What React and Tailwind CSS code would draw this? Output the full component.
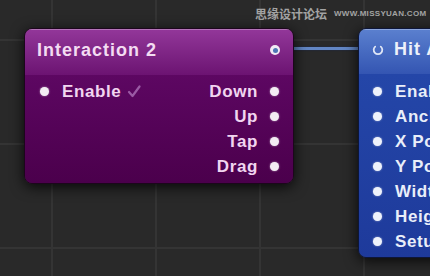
import React from "react";

const purpleOutputs = ["Down", "Up", "Tap", "Drag"];
const blueInputs = ["Enable", "Anchor Point", "X Position", "Y Position", "Width", "Height", "Setup Area"];

function Dot({ className = "bg-[#f3ecf3]" }) {
  return <span className={`block w-[9px] h-[9px] rounded-full shrink-0 shadow-[0_0_2px_rgba(255,255,255,0.6)] ${className}`} />;
}

function Check() {
  return (
    <svg width="14" height="13" viewBox="0 0 14 13" className="shrink-0">
      <path d="M2 7 L5.5 11 L12.5 1.5" fill="none" stroke="#9a5aa4" strokeWidth="2.2" strokeLinecap="round" strokeLinejoin="round" />
    </svg>
  );
}

function InputRing() {
  return (
    <svg width="12" height="12" viewBox="0 0 12 12" className="shrink-0">
      <path d="M3.2 2.6 A4.3 4.3 0 1 0 8.8 2.6" fill="none" stroke="#dfe6f6" strokeWidth="1.8" strokeLinecap="round" />
    </svg>
  );
}

export default function App() {
  return (
    <div
      className="relative w-[430px] h-[276px] overflow-hidden bg-[#292929] bg-[linear-gradient(to_right,#343434_2px,transparent_2px),linear-gradient(to_bottom,#343434_2px,transparent_2px)] bg-[size:104px_104px] bg-[position:51px_39px]"
      style={{ fontFamily: '"Liberation Sans", Arial, sans-serif' }}
    >
      {/* watermark */}
      <div className="absolute top-[8px] left-[255px] flex items-center gap-[7px] text-[#a3a3a3]">
        <span className="text-[12px] font-bold leading-none" style={{ fontFamily: '"Noto Sans CJK SC", sans-serif' }}>
          思缘设计论坛
        </span>
        <span className="text-[8px] font-bold leading-none tracking-[0.3px]">WWW.MISSYUAN.COM</span>
      </div>

      {/* connection */}
      <div className="absolute left-[293px] top-[47px] w-[66px] h-[3px] bg-[#6286c4] shadow-[0_0_2px_rgba(20,40,90,0.8)]" />

      {/* Interaction 2 node */}
      <div className="absolute left-[24px] top-[28px] w-[270px] h-[156px] rounded-[8px] border border-[#1c061c] overflow-hidden shadow-[0_3px_14px_rgba(0,0,0,0.8)] flex flex-col">
        <div className="h-[46px] shrink-0 flex items-center justify-between pl-[12px] pr-[13px] pb-[4px] bg-linear-to-b from-[#93379a] to-[#6c1372] shadow-[inset_0_1px_0_rgba(255,255,255,0.3)]">
          <span className="text-[18px] font-bold tracking-[1px] text-[#f3dcf2]">Interaction 2</span>
          <span className="w-[10px] h-[10px] rounded-full bg-[#f1eaf4] flex items-center justify-center">
            <span className="w-[5px] h-[5px] rounded-full bg-[#4d77b5]" />
          </span>
        </div>
        <div className="flex-1 flex justify-between pt-[4px] pl-[15px] pr-[14px] bg-linear-to-b from-[#5d0762] to-[#4b004c]">
          <div className="flex items-center h-[25px] gap-[13px]">
            <Dot />
            <div className="flex items-center gap-[6px]">
              <span className="text-[17px] font-bold tracking-[0.6px] text-[#f1d5f0]">Enable</span>
              <Check />
            </div>
          </div>
          <div className="flex flex-col">
            {purpleOutputs.map((label) => (
              <div key={label} className="flex items-center justify-end h-[25px] gap-[12px]">
                <span className="text-[17px] font-bold tracking-[0.6px] text-[#f1d5f0]">{label}</span>
                <Dot />
              </div>
            ))}
          </div>
        </div>
      </div>

      {/* Hit Area node */}
      <div className="absolute left-[358px] top-[28px] w-[200px] h-[230px] rounded-[8px] border border-[#0d1638] overflow-hidden shadow-[0_3px_14px_rgba(0,0,0,0.8)] flex flex-col">
        <div className="h-[45px] shrink-0 flex items-center gap-[10px] pl-[13px] pb-[4px] bg-linear-to-b from-[#5b80cf] to-[#3455b2] shadow-[inset_0_1px_0_rgba(255,255,255,0.3)]">
          <InputRing />
          <span className="text-[18px] font-bold tracking-[1px] text-[#edf1fa] whitespace-nowrap">Hit Area</span>
        </div>
        <div className="flex-1 flex flex-col pt-[5px] pl-[14px] bg-linear-to-b from-[#2446a8] to-[#1e3a9b]">
          {blueInputs.map((label) => (
            <div key={label} className="flex items-center h-[25px] gap-[13px]">
              <Dot className="bg-[#eef2fb]" />
              <span className="text-[17px] font-bold tracking-[0.6px] text-[#e9eef9] whitespace-nowrap">{label}</span>
            </div>
          ))}
        </div>
      </div>
    </div>
  );
}
